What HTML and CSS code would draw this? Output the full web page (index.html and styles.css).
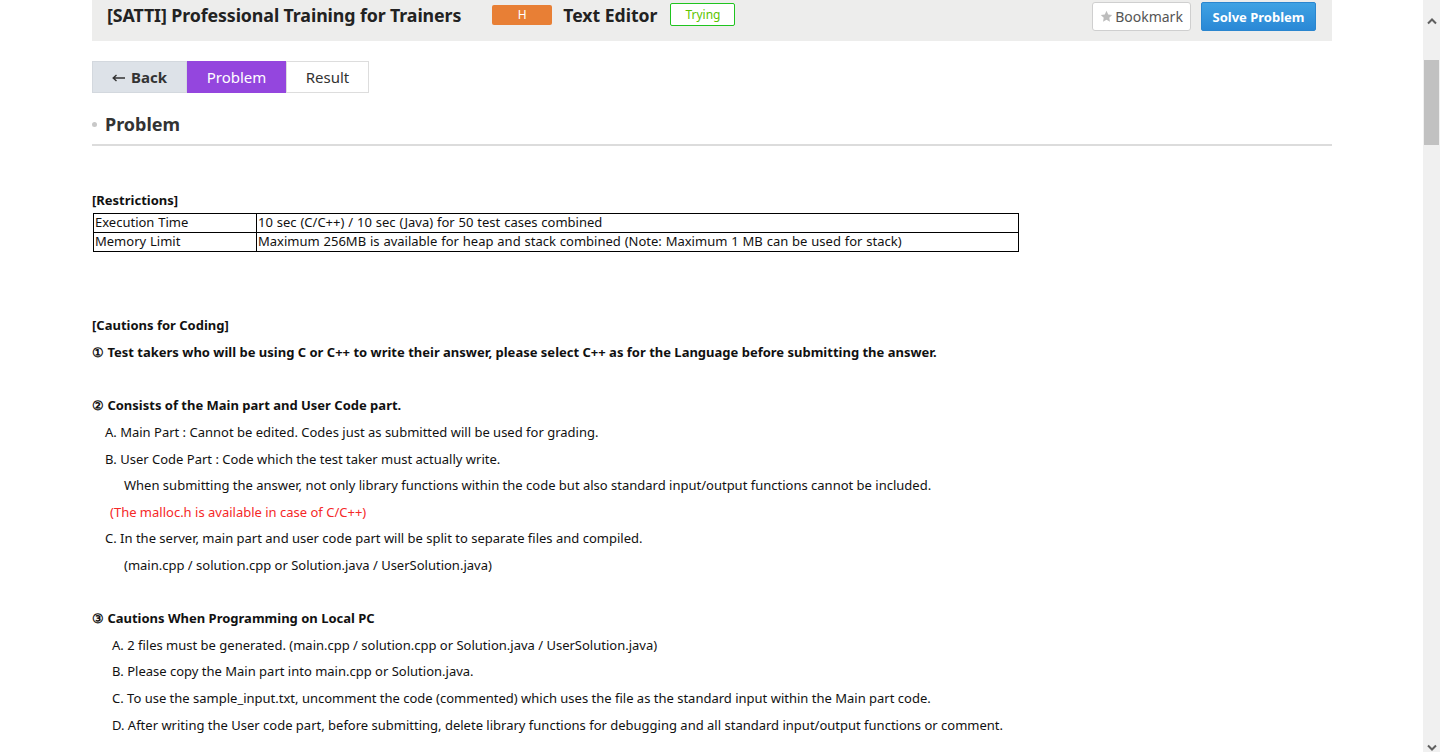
FILE: index.html
```html
<!DOCTYPE html>
<html>
<head>
<meta charset="utf-8">
<link rel="stylesheet" href="styles.css">
</head>
<body>
<div class="page">
  <div class="wrap">
    <div class="topbar">
      <div class="tb-left">
        <h1 class="title">[SATTI] Professional Training for Trainers</h1>
        <span class="level">H</span>
        <span class="subject">Text Editor</span>
        <span class="status">Trying</span>
      </div>
      <div class="tb-right">
        <button class="btn-bookmark"><svg class="star" viewBox="0 0 16 16" width="13" height="13"><path d="M8 1l2.1 4.5 4.9.6-3.6 3.4.9 4.9L8 12l-4.3 2.4.9-4.9L1 6.1l4.9-.6z" fill="#bdbdbd"/></svg>Bookmark</button>
        <button class="btn-solve">Solve Problem</button>
      </div>
    </div>

    <div class="tabs">
      <a class="tab tab-back"><svg class="arrow" viewBox="0 0 13 8" width="13" height="8"><path d="M13 4H2M4.5 1L1.2 4l3.3 3" stroke="#333" stroke-width="1.4" fill="none"/></svg>Back</a>
      <a class="tab tab-active">Problem</a>
      <a class="tab tab-result">Result</a>
    </div>

    <h2 class="section-title"><span class="dot"></span>Problem</h2>

    <div class="content">
      <p class="b">[Restrictions]</p>
      <table class="limits">
        <tr><td class="c1">Execution Time</td><td>10 sec (C/C++) / 10 sec (Java) for 50 test cases combined</td></tr>
        <tr><td class="c1">Memory Limit</td><td>Maximum 256MB is available for heap and stack combined (Note: Maximum 1 MB can be used for stack)</td></tr>
      </table>

      <p class="b cautions">[Cautions for Coding]</p>
      <p class="b">① Test takers who will be using C or C++ to write their answer, please select C++ as for the Language before submitting the answer.</p>
      <p class="blank"></p>
      <p class="b">② Consists of the Main part and User Code part.</p>
      <p class="i1">A. Main Part : Cannot be edited. Codes just as submitted will be used for grading.</p>
      <p class="i1">B. User Code Part : Code which the test taker must actually write.</p>
      <p class="i2">When submitting the answer, not only library functions within the code but also standard input/output functions cannot be included.</p>
      <p class="red">(The malloc.h is available in case of C/C++)</p>
      <p class="i1">C. In the server, main part and user code part will be split to separate files and compiled.</p>
      <p class="i2">(main.cpp / solution.cpp or Solution.java / UserSolution.java)</p>
      <p class="blank"></p>
      <p class="b">③ Cautions When Programming on Local PC</p>
      <p class="i3">A. 2 files must be generated. (main.cpp / solution.cpp or Solution.java / UserSolution.java)</p>
      <p class="i3">B. Please copy the Main part into main.cpp or Solution.java.</p>
      <p class="i3">C. To use the sample_input.txt, uncomment the code (commented) which uses the file as the standard input within the Main part code.</p>
      <p class="i3">D. After writing the User code part, before submitting, delete library functions for debugging and all standard input/output functions or comment.</p>
    </div>
  </div>
</div>
<div class="scrollbar">
  <div class="sb-up"><svg viewBox="0 0 10 8" width="10" height="8"><path d="M1 6.5L5 2.5 9 6.5" stroke="#606060" stroke-width="2" fill="none"/></svg></div>
  <div class="sb-thumb"></div>
  <div class="sb-track"></div>
  <div class="sb-down"><svg viewBox="0 0 10 8" width="10" height="8"><path d="M1 1.5L5 5.5 9 1.5" stroke="#606060" stroke-width="2" fill="none"/></svg></div>
</div>
</body>
</html>
```

FILE: styles.css
```css
html, body {
  margin: 0;
  padding: 0;
  height: 752px;
  overflow: hidden;
}
body {
  display: flex;
  font-family: "Noto Sans", "Open Sans", sans-serif;
  color: #222;
  background: #fff;
}
.page {
  flex: 1;
  padding: 0 91px 0 92px;
}
.wrap {
  width: 1240px;
}
.topbar {
  height: 41px;
  background: #ededec;
  display: flex;
  justify-content: space-between;
  align-items: flex-start;
  box-sizing: border-box;
}
.tb-left {
  display: flex;
  align-items: center;
  height: 29px;
  padding-left: 15px;
}
.title {
  margin: 0;
  font-size: 17.8px;
  font-weight: 700;
  color: #222;
  letter-spacing: -0.1px;
}
.level {
  margin-left: 31px;
  width: 60px;
  height: 20px;
  background: #e87f35;
  border-radius: 2px;
  color: #fff;
  font-size: 12px;
  display: flex;
  align-items: center;
  justify-content: center;
}
.subject {
  margin-left: 11px;
  font-size: 17.6px;
  font-weight: 700;
  color: #222;
}
.status {
  margin-left: 13px;
  width: 63px;
  height: 21px;
  border: 1px solid #1fc41f;
  border-radius: 2px;
  background: #fff;
  color: #5cc400;
  font-size: 12px;
  display: flex;
  align-items: center;
  justify-content: center;
}
.tb-right {
  display: flex;
  padding-top: 2px;
  padding-right: 16px;
  gap: 10px;
}
.btn-bookmark {
  width: 99px;
  height: 29px;
  border: 1px solid #cfcfcf;
  border-radius: 3px;
  background: #fff;
  color: #555;
  font-family: inherit;
  font-size: 14px;
  display: flex;
  align-items: center;
  justify-content: center;
  gap: 2px;
  padding: 0;
}
.btn-solve {
  width: 115px;
  height: 29px;
  border: 1px solid #2a86cf;
  border-radius: 2px;
  background: linear-gradient(#3fa2e3, #2a88d6);
  color: #fff;
  font-family: inherit;
  font-weight: 700;
  font-size: 13px;
  padding: 0;
}
.tabs {
  display: flex;
  margin-top: 20px;
  height: 32px;
}
.tab {
  display: flex;
  align-items: center;
  justify-content: center;
  box-sizing: border-box;
  font-size: 15px;
  color: #333;
}
.tab-back {
  width: 95px;
  background: #dde2e8;
  border: 1px solid #d3d8de;
  font-weight: 700;
  gap: 6px;
}
.arrow { margin-top: 1px; }
.tab-active {
  width: 99px;
  background: #9446de;
  color: #fff;
}
.tab-result {
  width: 83px;
  background: #fff;
  border: 1px solid #ddd;
}
.section-title {
  margin: 0;
  margin-top: 19px;
  height: 32px;
  border-bottom: 2px solid #dcdcdc;
  display: flex;
  align-items: flex-start;
  font-size: 18px;
  font-weight: 700;
  color: #333;
  line-height: 24px;
}
.dot {
  width: 5px;
  height: 5px;
  border-radius: 50%;
  background: #c8c8c8;
  margin: 10px 8px 0 0;
}
.content {
  padding-top: 41px;
  font-size: 13px;
  color: #111;
}
.content p {
  margin: 0;
  line-height: 26.6px;
  white-space: nowrap;
}
.b { font-weight: 700; }
.blank { height: 26.6px; }
.limits {
  border-collapse: collapse;
  margin-left: 1px;
  width: 926px;
  margin-top: -1px;
  word-spacing: 0.5px;
}
.limits td {
  border: 1px solid #000;
  padding: 0 1px;
  height: 18px;
  line-height: 17px;
  font-size: 13px;
}
.limits .c1 { width: 160px; }
.cautions { margin-top: 60px !important; margin-bottom: 1px !important; }
.i1 { padding-left: 13px; }
.i2 { padding-left: 32px; }
.i3 { padding-left: 20px; }
.red { padding-left: 18px; color: #f52828; }
.scrollbar {
  width: 17px;
  flex: none;
  background: #f0f0f0;
  display: flex;
  flex-direction: column;
  height: 752px;
}
.sb-up, .sb-down {
  height: 17px;
  display: flex;
  align-items: center;
  justify-content: center;
}
.sb-up { margin-top: 0; height: 52px; align-items: flex-start; padding-top: 17px; box-sizing: border-box; }
.sb-thumb {
  margin: 8px 1px 0;
  height: 85px;
  background: #c1c1c1;
}
.sb-track { flex: 1; }
.sb-down { height: 10px; align-items: flex-end; overflow: hidden; }
```
